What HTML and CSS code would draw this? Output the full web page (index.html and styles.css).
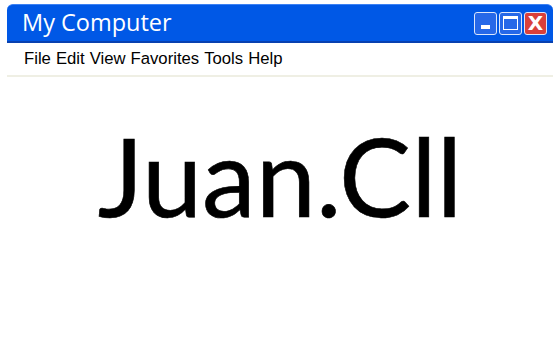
FILE: index.html
```html
<!DOCTYPE html>
<html lang="en">

<head>
    <meta charset="UTF-8">
    <title>My Computer</title>
    <link rel="stylesheet" href="styles.css">
</head>

<body>
    <div class="window">
        <div class="title-bar">
            <span class="title">My Computer</span>
            <div class="controls">
                <span class="ctl ctl-min"><span class="min-bar"></span></span>
                <span class="ctl ctl-max"><span class="max-box"></span></span>
                <span class="ctl ctl-close">X</span>
            </div>
        </div>
        <ul class="menu">
            <li>File</li>
            <li>Edit</li>
            <li>View</li>
            <li>Favorites</li>
            <li>Tools</li>
            <li>Help</li>
        </ul>
        <main class="content">
            <h1 class="name">Juan.Cll</h1>
        </main>
    </div>
</body>

</html>
```

FILE: styles.css
```css
* {
    margin: 0;
    padding: 0;
    box-sizing: border-box;
}

body {
    background-color: #ffffff;
    font-family: 'Liberation Sans', Arial, sans-serif;
}

.window {
    padding: 4px 7px 0;
}

.title-bar {
    height: 39px;
    background-color: #0058e6;
    border-top: 1px solid #3c81f3;
    border-bottom: 2px solid #0841b0;
    border-radius: 6px 6px 0 0;
    display: flex;
    align-items: center;
    justify-content: space-between;
    padding: 0 6px 0 15px;
}

.title {
    color: #ffffff;
    font-family: 'Open Sans', sans-serif;
    font-size: 23.5px;
    margin-top: -2px;
}

.controls {
    display: flex;
    gap: 2px;
}

.ctl {
    width: 23px;
    height: 23px;
    border: 1px solid #dbe6fb;
    border-radius: 3px;
    background-color: #2668e8;
    display: flex;
    align-items: center;
    justify-content: center;
}

.ctl-min {
    align-items: flex-end;
    padding-bottom: 5px;
}

.min-bar {
    width: 9px;
    height: 4px;
    background-color: #ffffff;
}

.max-box {
    width: 15px;
    height: 14px;
    border: 1px solid #ffffff;
    border-top-width: 3px;
}

.ctl-close {
    background-color: #d9403a;
    color: #ffffff;
    font-family: 'DejaVu Sans', sans-serif;
    font-weight: bold;
    font-size: 20px;
}

.menu {
    list-style: none;
    display: flex;
    gap: 5px;
    height: 34px;
    align-items: center;
    padding-left: 17px;
    font-size: 16.7px;
    color: #000000;
    border-bottom: 2px solid #efefe4;
}

.content {
    display: flex;
    justify-content: center;
    padding-top: 33px;
}

.name {
    font-family: 'Lato', sans-serif;
    font-weight: normal;
    font-size: 108px;
    color: #000000;
    -webkit-text-stroke: 0.6px #000000;
}
```
